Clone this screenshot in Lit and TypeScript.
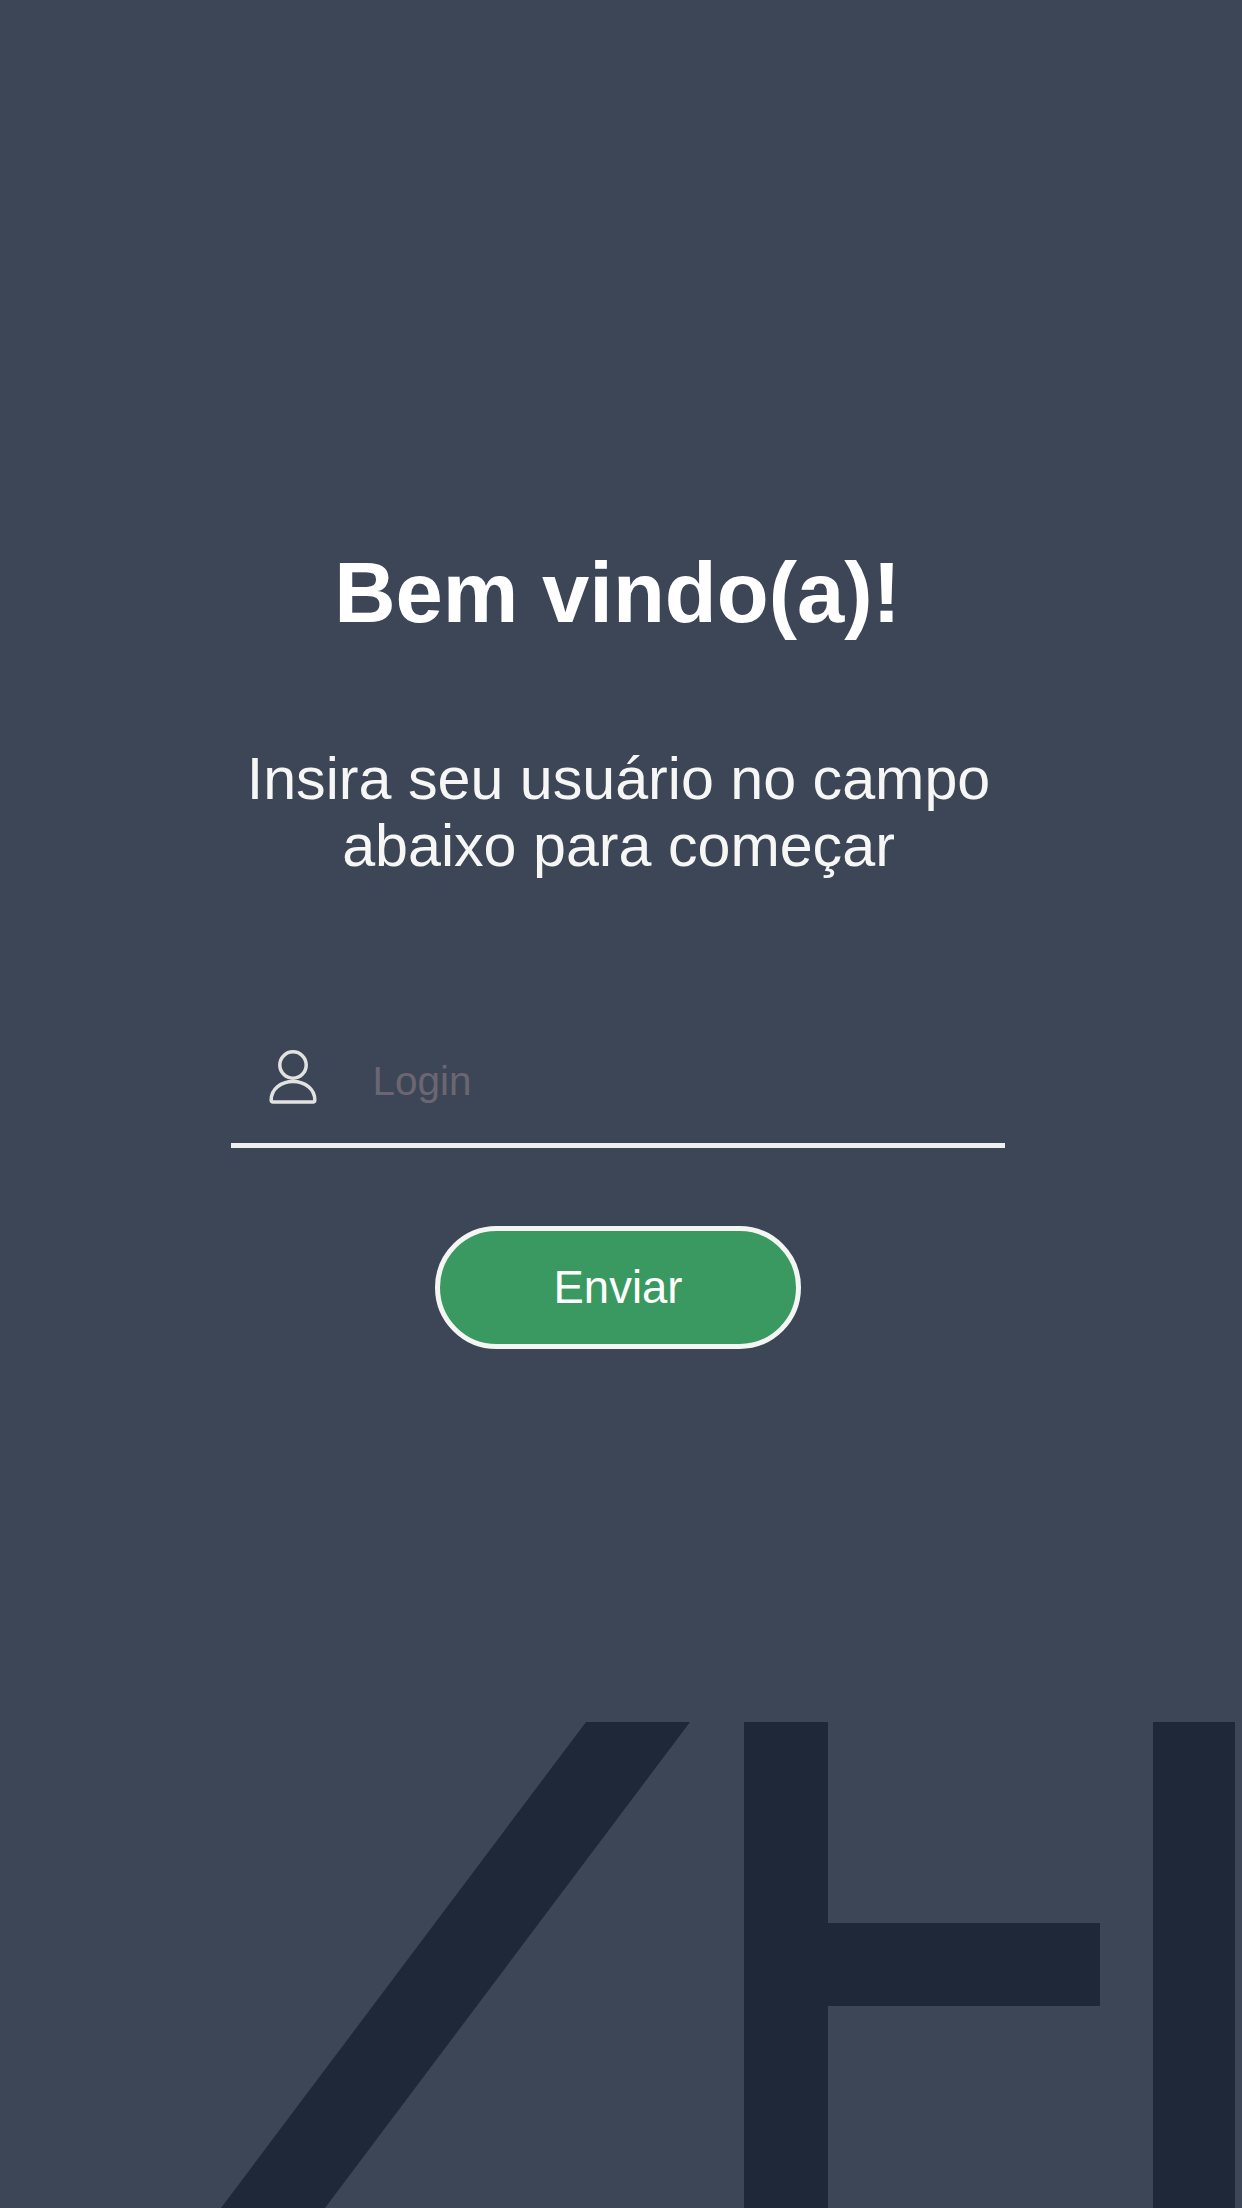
import { LitElement, css, html } from "lit";
import { customElement } from "lit/decorators.js";

@customElement("app-root")
export class AppRoot extends LitElement {
  static styles = css`
    :host {
      display: block;
      font-family: "Liberation Sans", Arial, sans-serif;
    }
    .page {
      height: 2208px;
      overflow: hidden;
      display: flex;
      flex-direction: column;
      background: #3d4656;
      color: #fff;
    }
    .form {
      display: flex;
      flex-direction: column;
      align-items: center;
      padding: 543px 7px 0 0;
    }
    h1 {
      margin: 0 0 102px;
      font-size: 85px;
      line-height: 100px;
      font-weight: 700;
    }
    p {
      margin: 0 0 0 2px;
      font-size: 59.2px;
      line-height: 67px;
      text-align: center;
      color: #f6f6f4;
    }
    .field {
      box-sizing: border-box;
      width: 774px;
      height: 269px;
      padding: 0 0 32px 38px;
      display: flex;
      align-items: flex-end;
      gap: 56px;
      border-bottom: 5px solid #f0f0ee;
    }
    .field svg {
      flex: none;
      display: block;
      margin-bottom: 7px;
      fill: none;
      stroke: #e2e2e0;
      stroke-width: 3.5;
    }
    input {
      flex: 1;
      min-width: 0;
      height: 60px;
      padding: 0;
      border: 0;
      outline: 0;
      background: transparent;
      font: 40.5px/60px "Liberation Sans", Arial, sans-serif;
      color: #fff;
    }
    input::placeholder {
      color: #6b6672;
      opacity: 1;
    }
    button {
      box-sizing: border-box;
      width: 366px;
      height: 123px;
      margin: 78px 0 0 1px;
      border: 5px solid #f4f6f4;
      border-radius: 62px;
      background: #3a9960;
      color: #fff;
      font: 45.5px "Liberation Sans", Arial, sans-serif;
    }
    .logo {
      display: block;
      margin-top: auto;
      fill: #1e2838;
    }
  `;

  render() {
    return html`
      <div class="page">
        <div class="form">
          <h1>Bem vindo(a)!</h1>
          <p>Insira seu usuário no campo<br />abaixo para começar</p>
          <label class="field">
            <svg width="48" height="54" viewBox="0 0 48 54">
              <circle cx="24" cy="15" r="13.2" />
              <path d="M4 52h40c1.200 0 1.800-.8 1.800-2C45.800 39 36 31.500 24 31.500S2.200 39 2.200 50c0 1.200.6 2 1.800 2z" />
            </svg>
            <input placeholder="Login" />
          </label>
          <button>Enviar</button>
        </div>
        <svg class="logo" width="1242" height="486" viewBox="0 0 1242 486">
          <path d="M586 0h104L325 486H221z" />
          <path d="M744 0h84v201h272v83H828v202h-84z" />
          <rect x="1153" width="82" height="486" />
        </svg>
      </div>
    `;
  }
}
